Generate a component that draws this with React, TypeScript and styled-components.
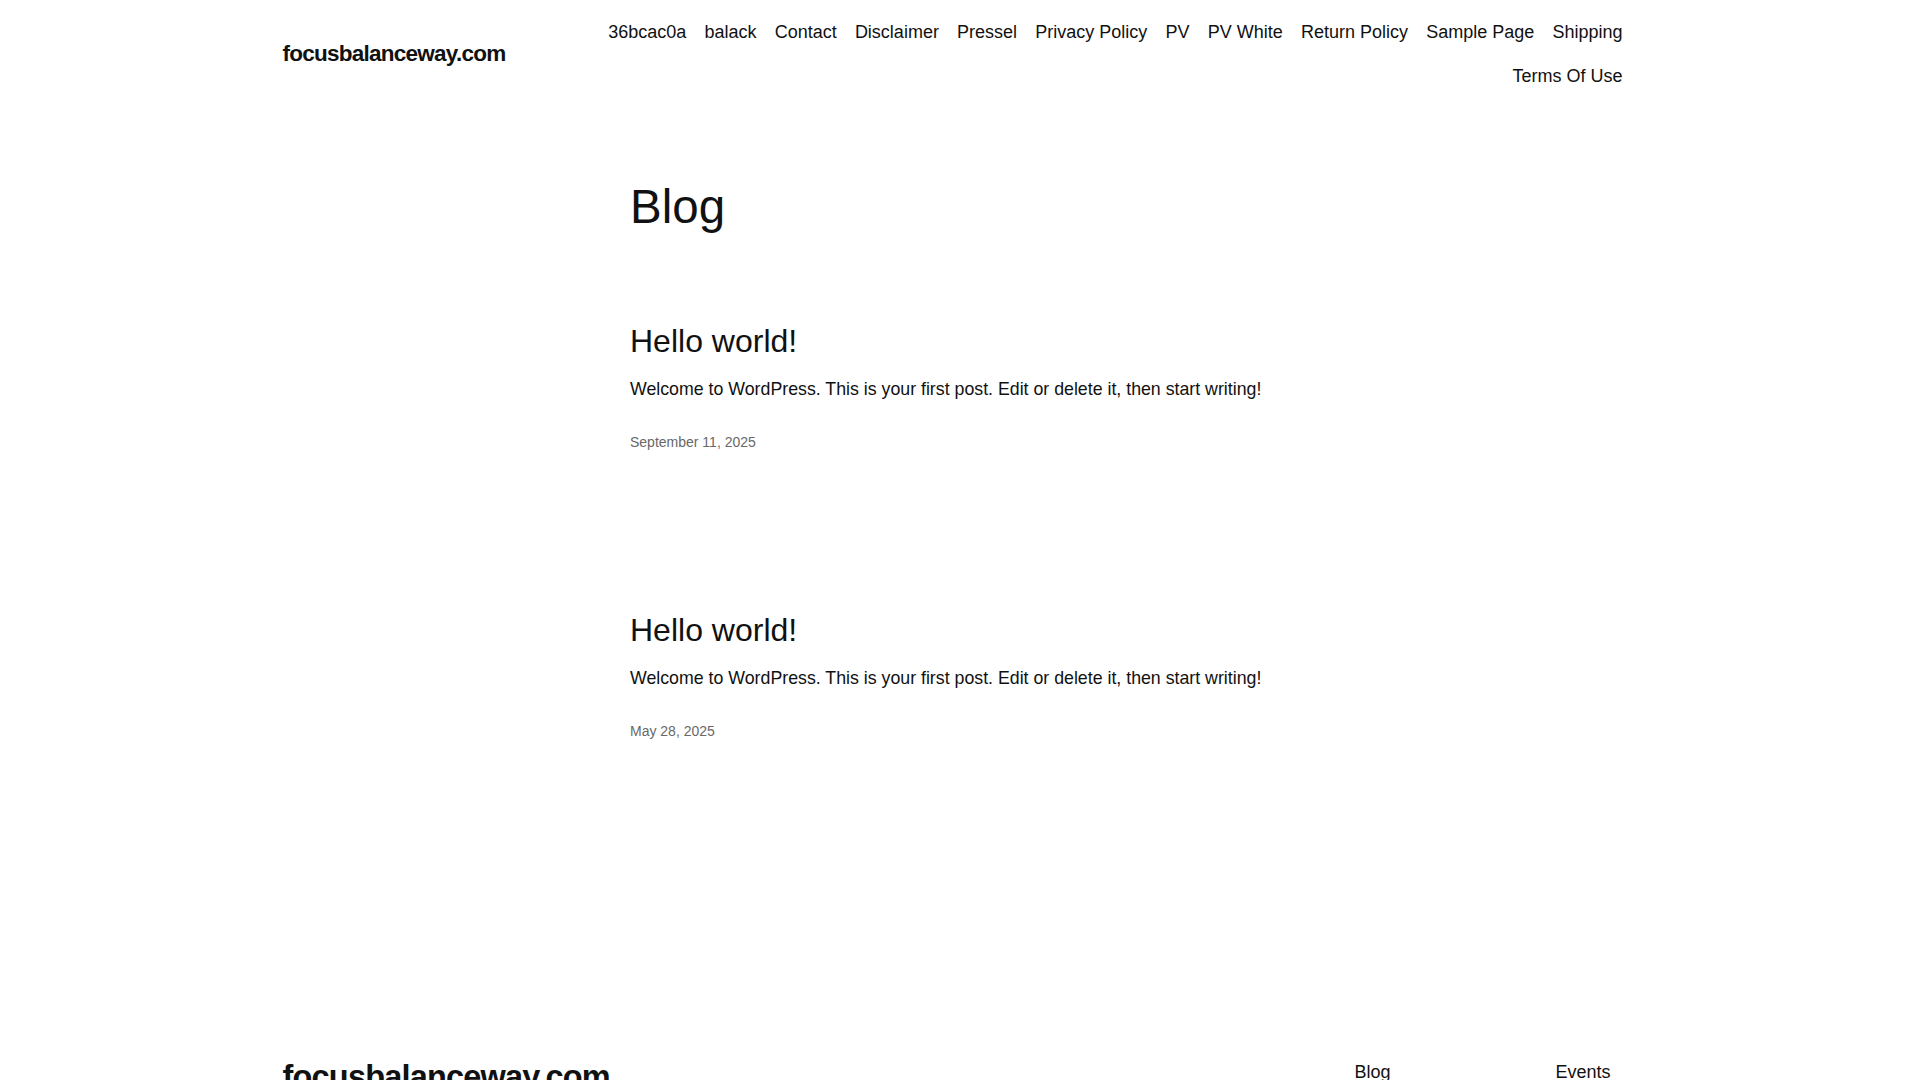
import styled, { createGlobalStyle } from 'styled-components'

const GlobalStyle = createGlobalStyle`
	html, body {
		margin: 0;
		padding: 0;
		background: #fff;
	}
	body {
		font-family: 'Liberation Sans', Arial, sans-serif;
		color: #111111;
	}
	a {
		color: inherit;
		text-decoration: none;
	}
`

// the reference was taken with a 15px scrollbar, so the page is 1905 wide
const Page = styled.div`
	width: calc(100% - 15px);
`

const Header = styled.header`
	max-width: 1340px;
	margin: 0 auto;
	padding-top: 19.5px;
	display: flex;
	justify-content: space-between;
	align-items: center;
	gap: 24px;
`

const SiteTitle = styled.a<{ $size: number; $spacing: number; $lift?: number }>`
	display: block;
	font-size: ${(p) => p.$size}px;
	letter-spacing: ${(p) => p.$spacing}px;
	font-weight: 700;
	line-height: 1.2;
	white-space: nowrap;
	color: #111111;
	margin-bottom: ${(p) => p.$lift ?? 0}px;
`

const NavList = styled.ul`
	list-style: none;
	margin: 0;
	padding: 0;
	display: flex;
	flex-wrap: wrap;
	justify-content: flex-end;
	column-gap: 18.2px;
	row-gap: 19px;
	flex: 1;
`

const NavItem = styled.li`
	font-size: 18px;
	line-height: 1.4;
	white-space: nowrap;
`

const Main = styled.main`
	max-width: 645px;
	margin: 0 auto;
	padding-top: 89.6px;
`

const PageTitle = styled.h1`
	margin: 0;
	font-size: 47.5px;
	font-weight: 400;
	line-height: 1.2;
`

const PostList = styled.div`
	margin-top: 86.6px;
	display: flex;
	flex-direction: column;
	gap: 158px;
`

const Post = styled.article``

const PostTitle = styled.h2`
	margin: 0;
	font-size: 32px;
	font-weight: 400;
	line-height: 1.2;
`

const Excerpt = styled.p`
	margin: 14.4px 0 0;
	font-size: 17.75px;
	line-height: 28.8px;
`

const PostDate = styled.time`
	display: block;
	margin-top: 28.6px;
	font-size: 14px;
	line-height: 1.5;
	color: #686868;
`

const Footer = styled.footer`
	max-width: 1340px;
	margin: 316px auto 0;
	padding-bottom: 60px;
`

const FooterTop = styled.div`
	display: flex;
	justify-content: space-between;
	align-items: flex-start;
`

const FooterNavs = styled.div`
	display: flex;
	gap: 139px;
	padding-top: 2px;
`

const FooterColumn = styled.ul`
	list-style: none;
	margin: 0;
	padding: 0;
	display: flex;
	flex-direction: column;
	gap: 12px;
`

const FooterBottom = styled.div`
	margin-top: 80px;
	display: flex;
	justify-content: space-between;
	font-size: 14px;
	line-height: 1.5;
	color: #111111;
`

const navLinks = [
	'36bcac0a',
	'balack',
	'Contact',
	'Disclaimer',
	'Pressel',
	'Privacy Policy',
	'PV',
	'PV White',
	'Return Policy',
	'Sample Page',
	'Shipping',
	'Terms Of Use',
]

const posts = [
	{ title: 'Hello world!', date: 'September 11, 2025' },
	{ title: 'Hello world!', date: 'May 28, 2025' },
]

const excerpt =
	'Welcome to WordPress. This is your first post. Edit or delete it, then start writing!'

const footerColumns = [
	['Blog', 'About', 'FAQs', 'Authors'],
	['Events', 'Shop', 'Patterns', 'Themes'],
]

const App = () => {
	return (
		<Page>
			<GlobalStyle />
			<Header>
				<SiteTitle href='#' $size={22.5} $spacing={-0.75} $lift={1.6}>
					focusbalanceway.com
				</SiteTitle>
				<nav>
					<NavList>
						{navLinks.map((link) => (
							<NavItem key={link}>
								<a href='#'>{link}</a>
							</NavItem>
						))}
					</NavList>
				</nav>
			</Header>
			<Main>
				<PageTitle>Blog</PageTitle>
				<PostList>
					{posts.map((post, i) => (
						<Post key={i}>
							<PostTitle>
								<a href='#'>{post.title}</a>
							</PostTitle>
							<Excerpt>{excerpt}</Excerpt>
							<PostDate>{post.date}</PostDate>
						</Post>
					))}
				</PostList>
			</Main>
			<Footer>
				<FooterTop>
					<SiteTitle href='#' $size={32.5} $spacing={-0.8}>
						focusbalanceway.com
					</SiteTitle>
					<FooterNavs>
						{footerColumns.map((col, i) => (
							<FooterColumn key={i}>
								{col.map((item) => (
									<NavItem key={item}>
										<a href='#'>{item}</a>
									</NavItem>
								))}
							</FooterColumn>
						))}
					</FooterNavs>
				</FooterTop>
				<FooterBottom>
					<span>Twenty Twenty-Five</span>
					<span>Designed with WordPress</span>
				</FooterBottom>
			</Footer>
		</Page>
	)
}

export default App
